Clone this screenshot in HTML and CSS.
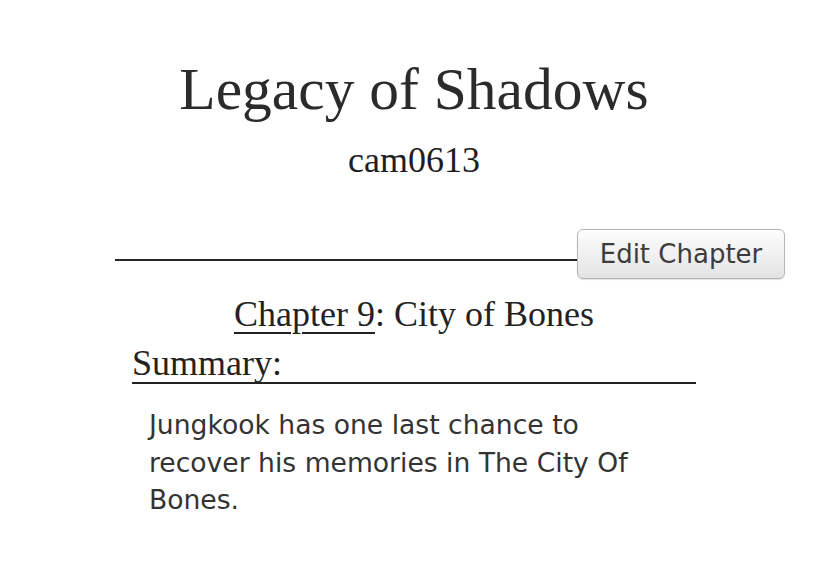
FILE: index.html
```html
<!DOCTYPE html>
<html>
<head>
<meta charset="utf-8">
<link rel="stylesheet" href="styles.css">
</head>
<body>
<div class="page">
  <h1 class="title">Legacy of Shadows</h1>
  <div class="author">cam0613</div>
  <div class="toolbar">
    <div class="rule"></div>
    <button class="edit-btn">Edit Chapter</button>
  </div>
  <div class="main">
    <h2 class="chapter"><a class="chapter-link" href="#">Chapter 9</a>: City of Bones</h2>
    <div class="summary-label">Summary:</div>
    <p class="summary-text">Jungkook has one last chance to recover his memories in The City Of Bones.</p>
  </div>
</div>
</body>
</html>
```
FILE: styles.css
```css
html, body {
  margin: 0;
  padding: 0;
  background: #ffffff;
}
.page {
  width: 828px;
  font-family: "Liberation Serif", serif;
  color: #2b2b2b;
}
.title {
  margin: 56px 0 0 0;
  font-size: 59.5px;
  line-height: 66px;
  font-weight: normal;
  text-align: center;
}
.author {
  margin-top: 18px;
  font-size: 36px;
  line-height: 40px;
  text-align: center;
  color: #1e1e1e;
}
.toolbar {
  margin: 49px 0 0 115px;
  width: 670px;
  display: flex;
  align-items: flex-end;
}
.rule {
  flex: 1;
  height: 2px;
  background: #262626;
  margin-bottom: 18px;
}
.edit-btn {
  width: 208px;
  height: 50px;
  box-sizing: border-box;
  border: 1px solid #b4b4b4;
  border-radius: 6px;
  background: linear-gradient(#fdfdfd, #e4e4e4);
  box-shadow: 0 1px 1px rgba(0,0,0,0.12);
  font-family: "DejaVu Sans", Verdana, sans-serif;
  font-size: 26px;
  color: #3c3c3c;
  padding: 0;
  margin-left: -1px;
}
.main {
  width: 564px;
  margin: 14px auto 0 auto;
}
.chapter {
  margin: 0;
  font-size: 36px;
  line-height: 42px;
  font-weight: normal;
  text-align: center;
  color: #222;
}
.chapter-link {
  color: #222;
  text-decoration: underline;
  text-decoration-thickness: 2px;
  text-underline-offset: 6px;
}
.summary-label {
  margin-top: 10px;
  font-size: 36px;
  line-height: 37px;
  border-bottom: 2px solid #222;
  color: #222;
}
.summary-text {
  margin: 22px 0 0 0;
  padding-left: 17px;
  font-family: "DejaVu Sans", Verdana, sans-serif;
  font-size: 26.6px;
  line-height: 37.5px;
  color: #333;
  width: 530px;
}
```
